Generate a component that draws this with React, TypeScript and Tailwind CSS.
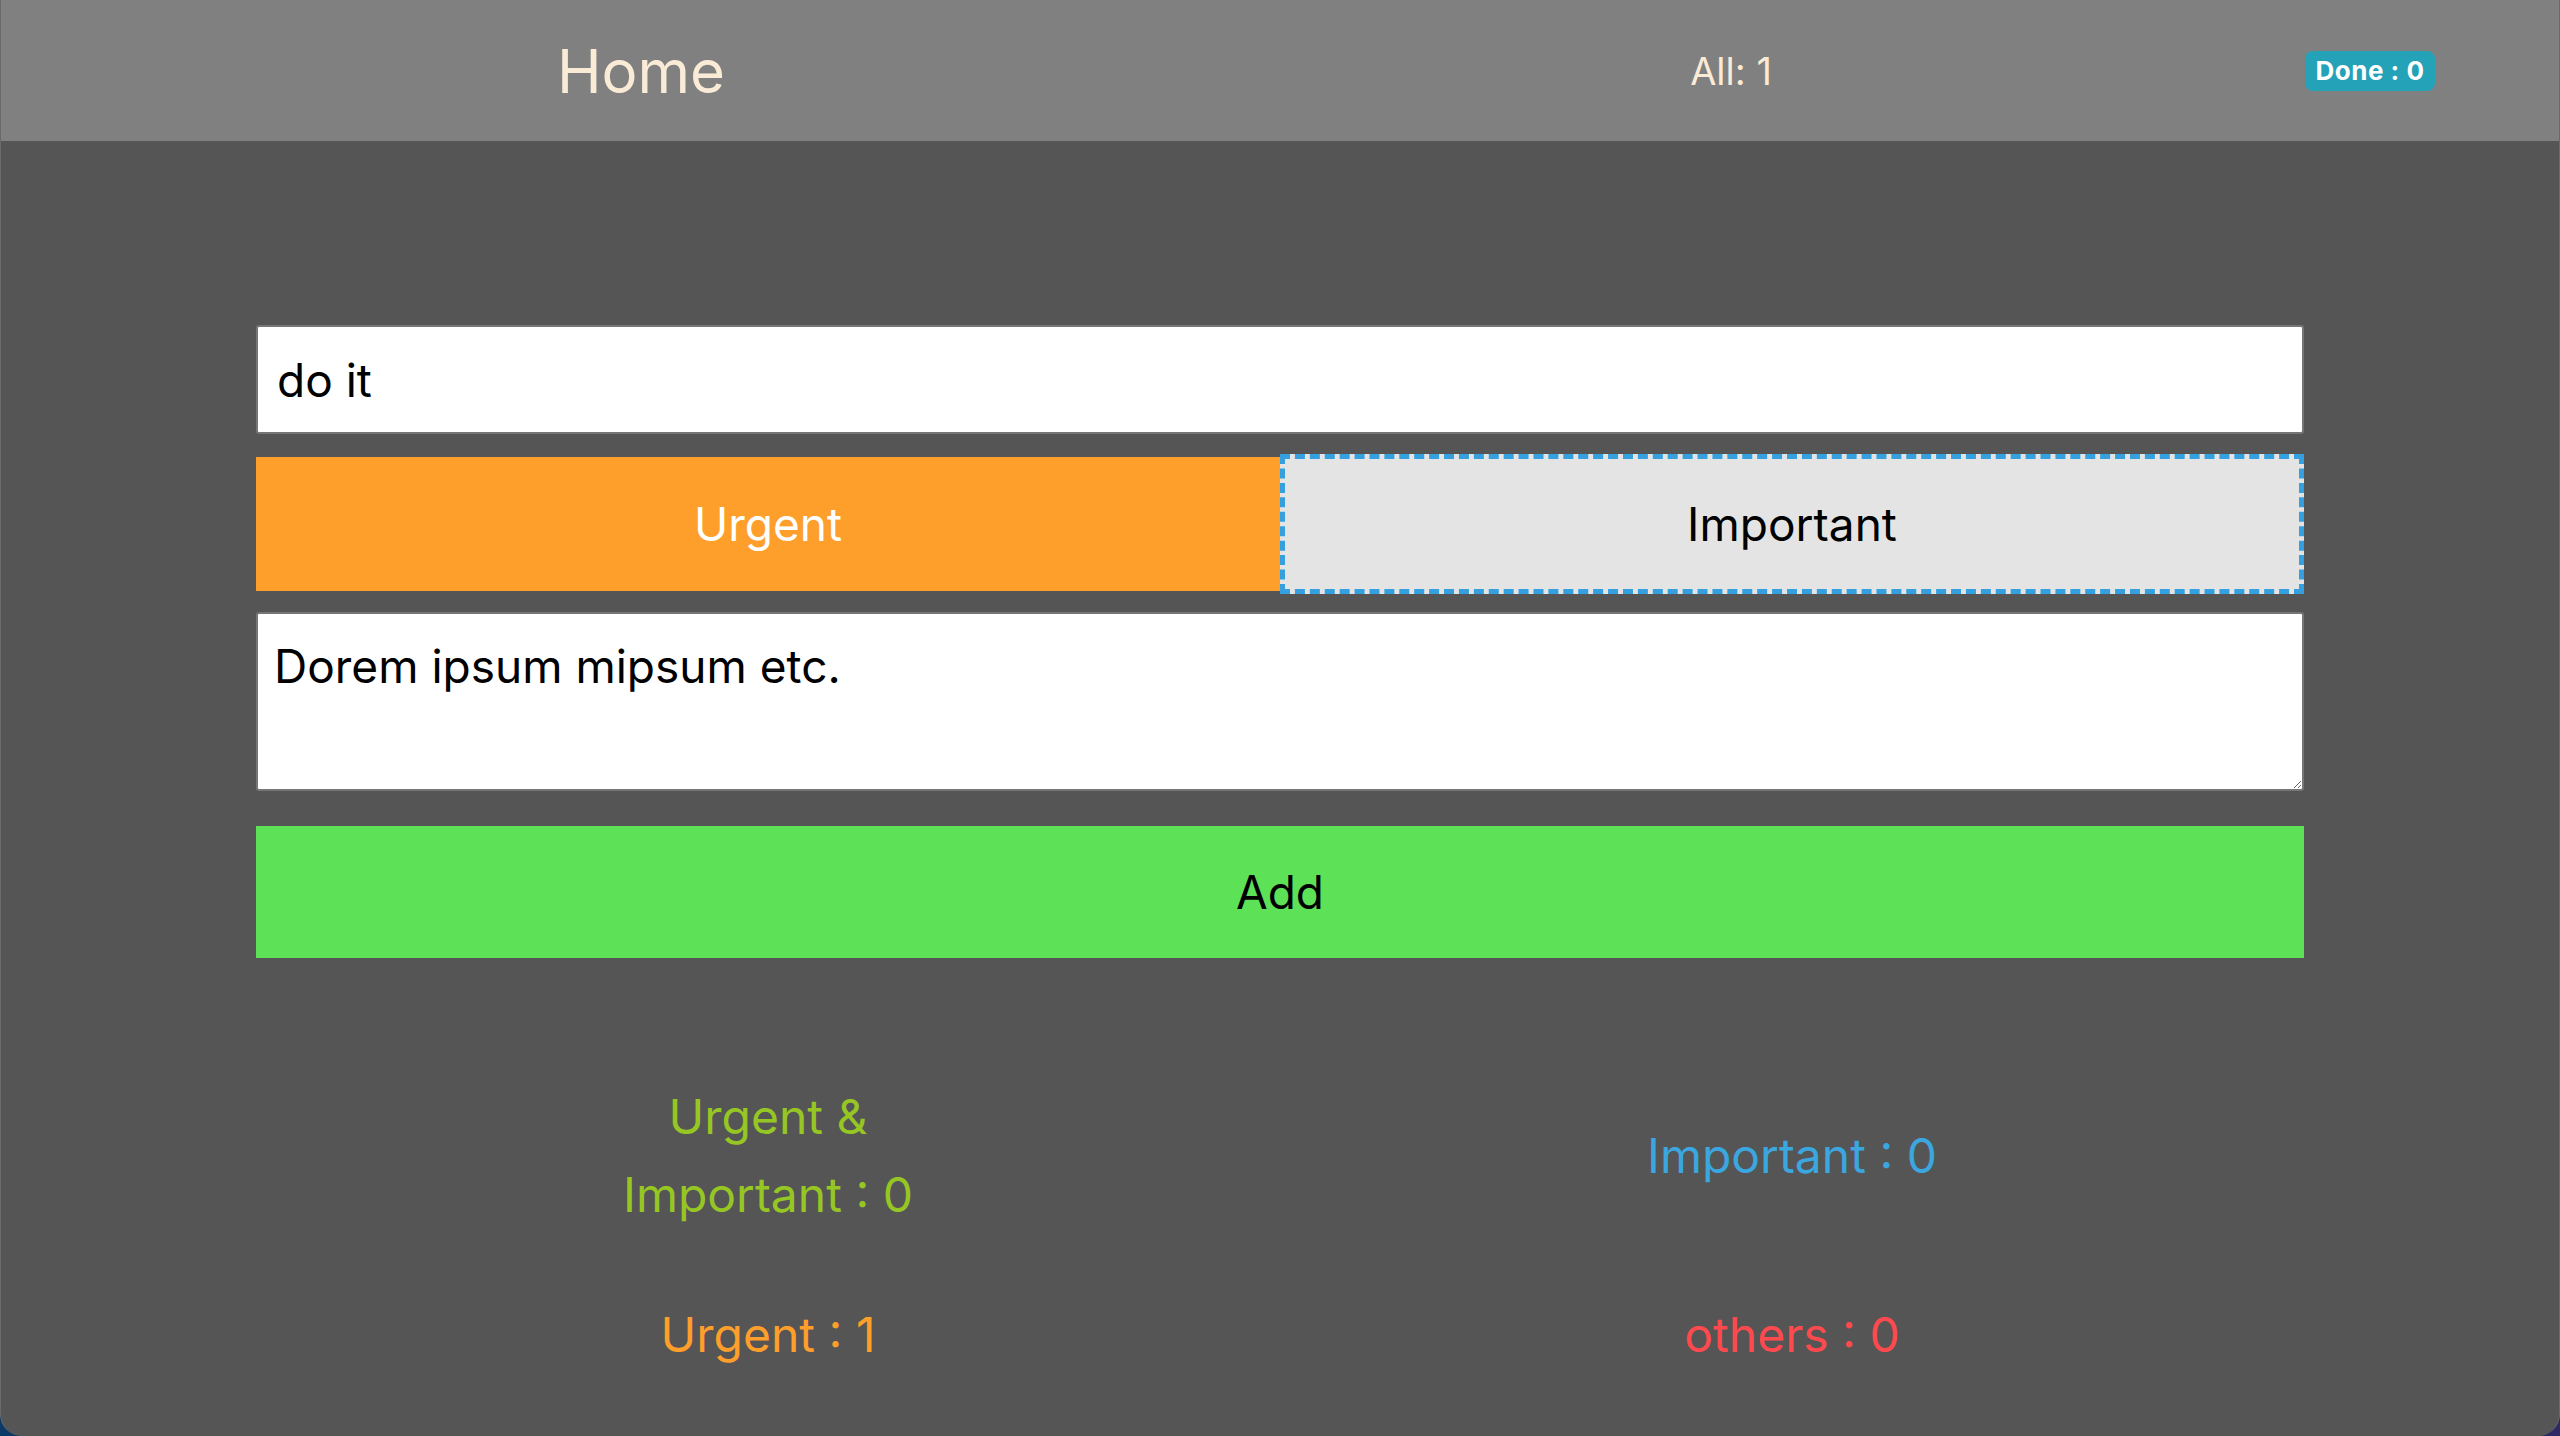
import React from 'react';

const Header = () => (
    <div className="flex h-[141px] items-center bg-[#808080] text-[#faebd7]">
        <div className="flex w-[1280px] justify-center">
            <span className="text-[60px] leading-none">Home</span>
        </div>
        <div className="flex w-[900px] justify-center">
            <span className="text-[38px] leading-none">All: 1</span>
        </div>
        <div className="flex flex-1 justify-center">
            <span className="flex h-[40px] items-center rounded-[8px] bg-[#23a2b8] px-[11px] text-[26px] font-bold leading-none tracking-[0.5px] text-white">
                Done : 0
            </span>
        </div>
    </div>
);

const Stats = () => (
    <div className="mt-[120px] grid grid-cols-2 gap-y-[62px] text-center text-[48px] leading-[78px]">
        <div className="flex justify-center">
            <p className="w-[420px] text-[#96c624]">Urgent &amp; Important : 0</p>
        </div>
        <div className="flex items-center justify-center">
            <p className="text-[#3ba6df]">Important : 0</p>
        </div>
        <div className="flex justify-center">
            <p className="text-[#fe9e2b]">Urgent : 1</p>
        </div>
        <div className="flex justify-center">
            <p className="text-[#fe4a4e]">others : 0</p>
        </div>
    </div>
);

export default function App() {
    return (
        <div className="h-[1436px] bg-gradient-to-r from-[#0b3a66] to-[#2e2a63]" style={{ fontFamily: 'Inter, "Noto Sans", sans-serif' }}>
            <div className="h-full overflow-hidden rounded-b-[22px] border-x border-[#6a6a6a] bg-[#555555]">
                <Header />
                <div className="mx-auto mt-[184px] w-[2048px]">
                    <input
                        className="h-[109px] w-full rounded-[3px] border-2 border-[#767676] bg-white px-[19px] text-[46px] text-black"
                        defaultValue="do it"
                    />
                    <div className="mt-[20px] flex h-[140px] items-center">
                        <button className="h-[134px] w-1/2 bg-[#fe9f2b] text-[46px] text-white">Urgent</button>
                        <button className="h-[140px] w-1/2 border-[5px] border-dashed border-[#34a0e0] bg-[#e4e4e4] text-[46px] text-black">
                            Important
                        </button>
                    </div>
                    <textarea
                        className="mt-[18px] block h-[179px] w-full rounded-[3px] border-2 border-[#767676] bg-white px-[16px] pt-[24px] pb-[10px] text-[46px] leading-tight text-black"
                        defaultValue="Dorem ipsum mipsum etc."
                    />
                    <button className="mt-[35px] block h-[132px] w-full bg-[#5de157] text-[46px] text-black">Add</button>
                    <Stats />
                </div>
            </div>
        </div>
    );
}
